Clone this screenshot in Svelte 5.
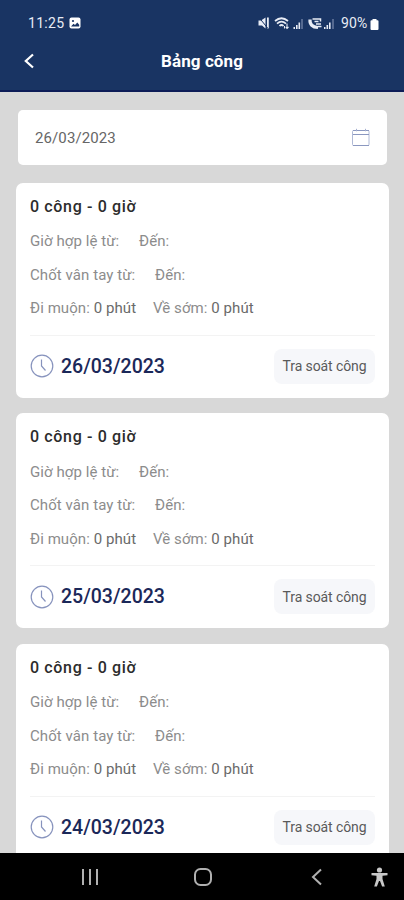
<script lang="ts">
  const selected = "26/03/2023";

  const days = [
    { date: "26/03/2023", work: 0, hours: 0, late: 0, early: 0 },
    { date: "25/03/2023", work: 0, hours: 0, late: 0, early: 0 },
    { date: "24/03/2023", work: 0, hours: 0, late: 0, early: 0 },
  ];
</script>

<div class="screen">
  <header>
    <div class="status">
      <span class="time">11:25</span>
      <svg class="photo" width="12" height="12" viewBox="0 0 12 12">
        <rect x="0.5" y="0.5" width="11" height="11" rx="2" fill="#fff" />
        <circle cx="4" cy="4" r="1.1" fill="#193463" />
        <path d="M2 9.5 4.5 6.8 6 8 8.3 5.5 10.2 7.8V9.5Z" fill="#193463" />
      </svg>
      <svg class="signals" width="78" height="14" viewBox="0 0 78 14">
        <g fill="#e8ecf5">
          <path d="M0.500 4.500H3l4.500-3v11L4 9.500H0.500z" />
          <path d="M9 1.500h1.800v11H9z" />
          <path d="M35.500 11H37v2h-1.500zM38 9h1.600v4H38zM40.500 6.500h1.600V13h-1.600z" />
          <path d="M66 11h1.500v2H66zM68.500 9h1.600v4h-1.600zM71 6.500h1.600V13H71z" />
        </g>
        <path d="M44 3v10M75 3v10" stroke="#7d8eb0" stroke-width="1.200" />
        <path d="M1 1.500l9 11" stroke="#193463" stroke-width="1" />
        <g fill="none" stroke="#e8ecf5">
          <path d="M17 5q6.500-5.500 13 0M19 7.700q4.500-4 9 0M21.500 10q2-2 4 0" stroke-width="1.700" />
          <path d="M29 7.500V12M26.500 10v2.500M27.800 11l1.200 1.500 1.500-1.500" stroke-width="1.100" />
          <path d="M52 3.500q-.5 7.500 8 8" stroke-width="3.200" />
          <path d="M54.500 3h8v2.500M56.500 5.500h4M58 8h5M60 10.500h3.500" stroke-width="1.500" />
        </g>
      </svg>
      <span class="percent">90%</span>
      <svg class="battery" width="9" height="11" viewBox="0 0 9 11">
        <path d="M2.500 0h4v1.200H7.500q1 0 1 1V10q0 1-1 1h-6q-1 0-1-1V2.200q0-1 1-1h1z" fill="#fff" />
      </svg>
    </div>
    <div class="bar">
      <svg class="back" width="12" height="18" viewBox="0 0 12 18">
        <path d="M10 2.500 2.800 9l7.200 6.500" fill="none" stroke="#fff" stroke-width="2.200" />
      </svg>
      <h1>Bảng công</h1>
    </div>
  </header>

  <main>
    <div class="picker">
      <span>{selected}</span>
      <svg width="18" height="19" viewBox="0 0 18 19">
        <rect x="0.500" y="2.500" width="16.500" height="15" rx="1" fill="none" stroke="#b0bad6" />
        <path d="M1 2.500h16M1 6.500h16M1 17.500h16" stroke="#8b98c0" />
        <path d="M4.500 0.800v2.500M13.500 0.800v2.500" stroke="#a5b0d0" />
      </svg>
    </div>

    {#each days as day (day.date)}
      <section class="card">
        <h2>{day.work} công - {day.hours} giờ</h2>
        <div class="row times"><span class="valid">Giờ hợp lệ từ:</span><span>Đến:</span></div>
        <div class="row times"><span class="finger">Chốt vân tay từ:</span><span>Đến:</span></div>
        <div class="row">
          <span class="late">Đi muộn: <b>{day.late} phút</b></span>
          <span>Về sớm: <b>{day.early} phút</b></span>
        </div>
        <div class="foot">
          <svg width="24" height="24" viewBox="0 0 24 24" fill="none">
            <circle cx="12" cy="12" r="10.800" stroke="#8793bd" stroke-width="1.200" />
            <path d="M11.500 5.500V12l4 4.500" stroke="#8793bd" stroke-width="1.200" />
          </svg>
          <strong>{day.date}</strong>
          <button>Tra soát công</button>
        </div>
      </section>
    {/each}
  </main>

  <nav>
    <svg width="404" height="47" viewBox="0 0 404 47" fill="none" stroke="#b0b0b0" stroke-width="2">
      <path d="M83 16v16M90 16v16M97 16v16" />
      <rect x="195" y="16" width="16" height="16" rx="5.500" />
      <path d="M321 16.500 313 24l8 7.500" />
      <circle cx="379.500" cy="17" r="2.600" fill="#c8c8c8" stroke="none" />
      <path
        d="M371.500 20h16v2.200l-5 .5v3.300l2.300 7.500h-2.700l-2.100-5.500h-1l-2.100 5.500h-2.700l2.300-7.500v-3.300l-5-.5z"
        fill="#c8c8c8"
        stroke="none"
      />
    </svg>
  </nav>
</div>

<style>
  :global(body) {
    margin: 0;
  }

  .screen {
    width: 404px;
    height: 900px;
    display: flex;
    flex-direction: column;
    overflow: hidden;
    background: #d8d8d8;
    font-family: Roboto, "Liberation Sans", sans-serif;
  }

  header {
    flex: none;
    box-sizing: border-box;
    height: 92px;
    background: #193463;
    border-bottom: 2px solid #0d1c57;
    color: #fff;
  }

  .status {
    display: flex;
    align-items: center;
    height: 46px;
    padding: 0 25px 0 28px;
    font-size: 14px;
    color: #e8ecf5;
  }

  .time {
    width: 36px;
    letter-spacing: 0.3px;
  }

  .photo {
    margin-left: 5px;
  }

  .signals {
    margin-left: auto;
    margin-right: 5px;
  }

  .percent {
    width: 28px;
    letter-spacing: 0.1px;
  }

  .battery {
    margin: 2px 0 0 1px;
  }

  .bar {
    display: grid;
    grid-template-columns: 36px 1fr 36px;
    align-items: center;
    height: 30px;
  }

  .back {
    margin-left: 23px;
  }

  h1 {
    margin: 0;
    text-align: center;
    font-size: 17px;
    line-height: 29px;
    font-weight: 700;
    letter-spacing: 0.1px;
  }

  main {
    flex: 1;
    min-height: 0;
    overflow: hidden;
    padding: 18px 15px 0 16px;
  }

  .picker {
    display: flex;
    align-items: center;
    justify-content: space-between;
    box-sizing: border-box;
    height: 55px;
    margin: 0 2px 17.5px;
    padding: 0 17px;
    border-radius: 5px;
    background: #fff;
    color: #666;
    font-size: 15px;
    letter-spacing: 0.1px;
  }

  .card {
    box-sizing: border-box;
    height: 215px;
    margin-bottom: 15.5px;
    padding: 10px 14px 0;
    border-radius: 7px;
    background: #fff;
  }

  h2 {
    margin: 0 0 5.5px;
    font-size: 16px;
    line-height: 27px;
    font-weight: 500;
    color: #2c2c2c;
    letter-spacing: 0.65px;
  }

  .row {
    display: flex;
    height: 33.5px;
    line-height: 33.5px;
    font-size: 15px;
    color: #8c8c8c;
    letter-spacing: 0.07px;
    white-space: nowrap;
  }

  .valid {
    width: 109px;
  }

  .finger {
    width: 125px;
  }

  .late {
    width: 123px;
  }

  .row b {
    font-weight: 400;
    color: #6a6a6a;
  }

  .foot {
    display: flex;
    align-items: center;
    height: 61px;
    margin-top: 9px;
    border-top: 1px solid #f3f3f3;
  }

  .foot strong {
    margin-left: 7px;
    font-size: 19.5px;
    font-weight: 500;
    color: #1b2859;
  }

  button {
    width: 101px;
    height: 35px;
    margin-left: auto;
    padding: 0;
    border: 0;
    border-radius: 8px;
    background: #f6f7fa;
    color: #5a5a5a;
    font: 14px Roboto, "Liberation Sans", sans-serif;
    letter-spacing: -0.1px;
  }

  nav {
    flex: none;
    height: 47px;
    background: #000;
  }

  nav svg {
    display: block;
  }
</style>
